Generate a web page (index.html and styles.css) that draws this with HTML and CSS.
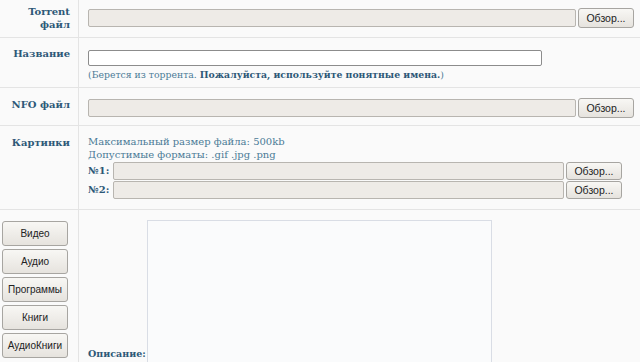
FILE: index.html
```html
<!doctype html>
<html>
<head>
  <meta charset="utf-8">
  <title>Загрузка</title>
  <link rel="stylesheet" href="styles.css">
</head>
<body>

  <table class="upload">
    <tr class="r-torrent">
      <td class="lbl">Torrent файл</td>
      <td class="val">
        <div class="file">
          <span class="file-field"></span>
          <button class="btn browse">Обзор...</button>
        </div>
      </td>
    </tr>
    <tr class="r-name">
      <td class="lbl">Название</td>
      <td class="val">
        <input class="text" type="text">
        <div class="hint">(Берется из торрента. <b>Пожалуйста, используйте понятные имена.</b>)</div>
      </td>
    </tr>
    <tr class="r-nfo">
      <td class="lbl">NFO файл</td>
      <td class="val">
        <div class="file">
          <span class="file-field"></span>
          <button class="btn browse">Обзор...</button>
        </div>
      </td>
    </tr>
    <tr class="r-pics">
      <td class="lbl">Картинки</td>
      <td class="val">
        <div class="note">Максимальный размер файла: 500kb</div>
        <div class="note">Допустимые форматы: .gif .jpg .png</div>
        <div class="pic">
          <b class="num">№1:</b>
          <div class="file">
            <span class="file-field"></span>
            <button class="btn browse">Обзор...</button>
          </div>
        </div>
        <div class="pic">
          <b class="num">№2:</b>
          <div class="file">
            <span class="file-field"></span>
            <button class="btn browse">Обзор...</button>
          </div>
        </div>
      </td>
    </tr>
    <tr class="r-descr">
      <td class="lbl cats">
        <button class="btn cat">Видео</button>
        <button class="btn cat">Аудио</button>
        <button class="btn cat">Программы</button>
        <button class="btn cat">Книги</button>
        <button class="btn cat">АудиоКниги</button>
      </td>
      <td class="val">
        <div class="descr">
          <b class="descr-lbl">Описание:</b>
          <textarea class="descr-box"></textarea>
        </div>
      </td>
    </tr>
  </table>

</body>
</html>
```

FILE: styles.css
```css
html, body {
  margin: 0;
  height: 100%;
  overflow: hidden;
  background: #fafafa;
}

.upload {
  border-collapse: collapse;
  width: 100%;
  font: 10px "DejaVu Serif", serif;
  color: #4b7b97;
}

.upload td {
  border-bottom: 1px solid #e4e4e4;
  padding: 0;
}

.lbl {
  width: 70px;
  border-right: 1px solid #e4e4e4;
  padding: 5px 8px 0 0 !important;
  text-align: right;
  vertical-align: top;
  font-weight: bold;
  color: #2d5877;
  line-height: 13px;
}

.val {
  padding: 0 6px 0 9px !important;
  vertical-align: top;
}

.r-torrent { height: 37px; }
.r-torrent .val { padding-top: 8px !important; }

.r-name { height: 50px; }
.r-name .lbl { padding-top: 9px !important; }
.r-name .val { padding-top: 12px !important; }

.r-nfo { height: 38px; }
.r-nfo .lbl { padding-top: 10px !important; }
.r-nfo .val { padding-top: 10px !important; }

.r-pics { height: 84px; }
.r-pics .lbl { padding-top: 10px !important; }
.r-pics .val { padding: 9px 18px 0 9px !important; }

.file {
  display: flex;
  align-items: center;
  gap: 2px;
}

.file-field {
  flex: 1;
  height: 16px;
  border: 1px solid #b8b5b0;
  border-radius: 2px;
  background: #eeebe7;
}

.btn {
  font: 10px "Liberation Sans", Arial, sans-serif;
  color: #222;
  border: 1px solid #a7a5a1;
  border-radius: 3px;
  background: linear-gradient(#f8f7f4, #e6e3de);
  padding: 0;
  cursor: pointer;
}

.browse {
  width: 56px;
  height: 20px;
  font-size: 10.5px;
}

.text {
  display: block;
  box-sizing: border-box;
  width: 454px;
  height: 16px;
  margin: 0;
  border: 1px solid #8c8c8c;
  border-radius: 2px;
  background: #fff;
}

.hint {
  margin-top: 2px;
  line-height: 13px;
  font-size: 9.3px;
}

.hint b {
  color: #2d5877;
}

.note {
  line-height: 13px;
}

.pic {
  display: flex;
  align-items: center;
  margin-top: 1px;
}

.pic .num {
  width: 25px;
  color: #2d5877;
}

.pic .file {
  flex: 1;
}

.pic .browse {
  height: 18px;
}

.cats {
  padding: 11px 0 0 2px !important;
  text-align: left;
}

.cat {
  display: block;
  width: 66px;
  height: 25px;
  margin-bottom: 3px;
}

.r-descr .val {
  padding-top: 10px !important;
}

.descr {
  display: flex;
  align-items: flex-start;
}

.descr-lbl {
  width: 59px;
  margin-top: 128px;
  font-size: 9.5px;
  color: #2d5877;
}

.descr-box {
  width: 343px;
  height: 160px;
  margin: 0;
  padding: 0;
  border: 1px solid #d9dde5;
  background: #fafbfc;
  resize: none;
}
```
